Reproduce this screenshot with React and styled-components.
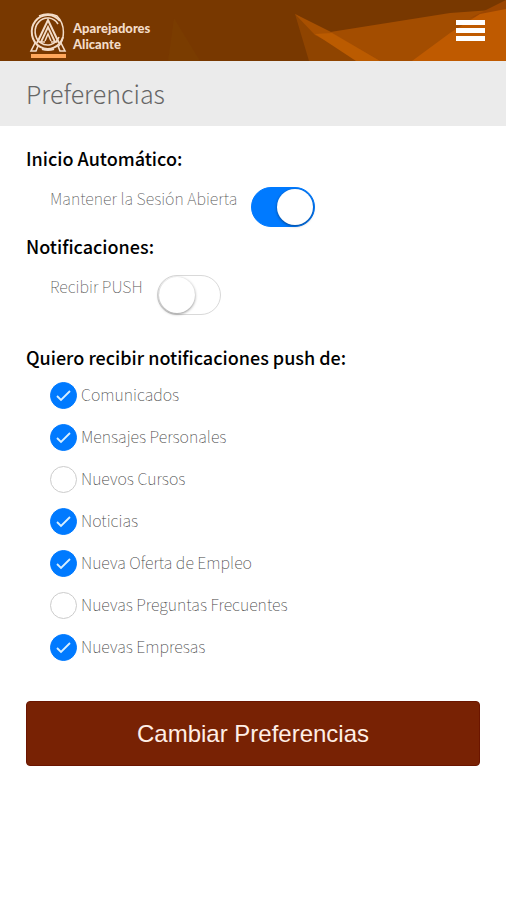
import React, { useState } from "react";
import styled, { createGlobalStyle } from "styled-components";

const opcionesIniciales = [
  { id: "comunicados", texto: "Comunicados", activo: true },
  { id: "mensajes", texto: "Mensajes Personales", activo: true },
  { id: "cursos", texto: "Nuevos Cursos", activo: false },
  { id: "noticias", texto: "Noticias", activo: true },
  { id: "empleo", texto: "Nueva Oferta de Empleo", activo: true },
  { id: "preguntas", texto: "Nuevas Preguntas Frecuentes", activo: false },
  { id: "empresas", texto: "Nuevas Empresas", activo: true },
];

function Logo() {
  return (
    <svg width="38" height="46" viewBox="0 0 38 46" fill="none" aria-hidden="true">
      <g stroke="#f3dcc8">
        <path d="M31 8A16 17 0 1 0 34 24" strokeWidth="2" />
        <path d="M29 11A12.5 13.5 0 1 0 30 24" strokeWidth="1.6" />
        <path d="M10 3Q19 -1 28 3Q36 11 34 24Q33 30 29 34" strokeWidth="1.5" />
        <path d="M8 30L19 7L30 30" strokeWidth="2" />
        <path d="M12 29L19 14L26 29" strokeWidth="1.8" />
        <path d="M16 28L19 21L22 28" strokeWidth="1.5" />
        <path d="M10 29H16M22 29H28" strokeWidth="1.4" />
        <path d="M6 30L2 38H7L9 33M32 30L36 38H31L29 33" strokeWidth="1.6" />
        <path d="M13 36Q19 38 25 36" strokeWidth="2" />
      </g>
      <rect x="2" y="41" width="35" height="4" fill="#ffa75b" />
    </svg>
  );
}

function Interruptor({ id, texto, activo, onChange }) {
  return (
    <FilaInterruptor>
      <label htmlFor={id}>{texto}</label>
      <Switch id={id} type="checkbox" role="switch" checked={activo} onChange={onChange} />
    </FilaInterruptor>
  );
}

function Opcion({ opcion, handleCambio }) {
  return (
    <FilaOpcion>
      <span className="casilla">
        <input
          id={opcion.id}
          type="checkbox"
          checked={opcion.activo}
          onChange={() => handleCambio(opcion.id)}
        />
        <svg width="26" height="26" viewBox="0 0 26 26" aria-hidden="true">
          <path d="M7 14L11 18L20 9" fill="none" stroke="#d9f0ff" strokeWidth="1.8" />
        </svg>
      </span>
      <label htmlFor={opcion.id}>{opcion.texto}</label>
    </FilaOpcion>
  );
}

export default function App() {
  const [sesion, setSesion] = useState(true);
  const [push, setPush] = useState(false);
  const [opciones, setOpciones] = useState(opcionesIniciales);

  const handleCambio = (id) => {
    setOpciones(opciones.map((o) => (o.id === id ? { ...o, activo: !o.activo } : o)));
  };

  return (
    <>
      <GlobalStyle />
      <Cabecera>
        <Fondo viewBox="0 0 506 61" preserveAspectRatio="none" aria-hidden="true">
          <path d="M174 18L200 61H168Z" fill="#7a3c00" />
          <path d="M295 14L350 46L380 61H309Z" fill="#8f4400" />
          <path d="M324 33L450 13L506 9V61H378Z" fill="#a34d00" />
          <path d="M295 14L335 34L380 61H365L315 35Z" fill="#a85000" />
          <path d="M315 34L332 33L380 61H356Z" fill="#bb5b00" />
          <path d="M470 18L506 0V12Z" fill="#9c4600" />
          <path d="M412 61L450 33L480 14L506 9V61Z" fill="#bf5a00" />
        </Fondo>
        <Marca href="#">
          <Logo />
          <span>
            Aparejadores
            <br />
            Alicante
          </span>
        </Marca>
        <BotonMenu type="button" aria-label="Menú">
          <span />
          <span />
          <span />
        </BotonMenu>
      </Cabecera>
      <BarraTitulo>
        <h1>Preferencias</h1>
      </BarraTitulo>
      <Formulario onSubmit={(e) => e.preventDefault()}>
        <Seccion>
          <h2>Inicio Automático:</h2>
          <Interruptor
            id="sesion"
            texto="Mantener la Sesión Abierta"
            activo={sesion}
            onChange={() => setSesion(!sesion)}
          />
        </Seccion>
        <Seccion>
          <h2>Notificaciones:</h2>
          <Interruptor
            id="push"
            texto="Recibir PUSH"
            activo={push}
            onChange={() => setPush(!push)}
          />
        </Seccion>
        <Lista>
          <legend>Quiero recibir notificaciones push de:</legend>
          {opciones.map((opcion) => (
            <Opcion key={opcion.id} opcion={opcion} handleCambio={handleCambio} />
          ))}
        </Lista>
        <BotonEnviar type="submit">Cambiar Preferencias</BotonEnviar>
      </Formulario>
    </>
  );
}

const GlobalStyle = createGlobalStyle`
  * {
    box-sizing: border-box;
  }
  body {
    margin: 0;
    background-color: #fff;
    color: #000;
    font-family: "Noto Sans CJK SC", "Noto Sans", sans-serif;
  }
  h1, h2 {
    margin: 0;
  }
`;

const Cabecera = styled.header`
  position: relative;
  display: flex;
  justify-content: space-between;
  align-items: center;
  height: 61px;
  padding: 0 21px 0 29px;
  background-color: #783800;
`;

const Fondo = styled.svg`
  position: absolute;
  inset: 0;
  width: 100%;
  height: 100%;
`;

const Marca = styled.a`
  position: relative;
  display: flex;
  align-items: center;
  gap: 6px;
  padding-top: 10px;
  color: #f3dcc8;
  font-family: Lato, sans-serif;
  font-size: 13px;
  font-weight: 900;
  line-height: 16px;
  text-decoration: none;
`;

const BotonMenu = styled.button`
  position: relative;
  display: flex;
  flex-direction: column;
  gap: 3px;
  padding: 0;
  border: none;
  background: none;
  cursor: pointer;
  span {
    width: 29px;
    height: 5px;
    background-color: #fff;
  }
`;

const BarraTitulo = styled.div`
  padding: 16px 26px;
  background-color: #ebebeb;
  h1 {
    color: #666;
    font-size: 25px;
    font-weight: 300;
    line-height: 33px;
  }
`;

const Formulario = styled.form`
  padding: 20px 26px;
`;

const Seccion = styled.section`
  padding-bottom: 7px;
  h2 {
    font-size: 18px;
    font-weight: 500;
    line-height: 24px;
  }
`;

const FilaInterruptor = styled.div`
  display: flex;
  align-items: flex-start;
  gap: 14px;
  padding: 17px 0 0 24px;
  label {
    color: #555;
    font-size: 16px;
    font-weight: 100;
    line-height: 22px;
  }
`;

const Switch = styled.input`
  appearance: none;
  flex-shrink: 0;
  width: 64px;
  height: 40px;
  margin: 0;
  padding: 1px;
  border: 1px solid ${({ checked }) => (checked ? "#007aff" : "#d9d9d9")};
  border-radius: 20px;
  background-color: ${({ checked }) => (checked ? "#007aff" : "#fff")};
  cursor: pointer;
  &::before {
    content: "";
    display: block;
    width: 36px;
    height: 36px;
    margin-left: ${({ checked }) => (checked ? "auto" : "0")};
    border-radius: 50%;
    background-color: #fff;
    box-shadow: 0 1px 3px rgba(0, 0, 0, 0.45);
  }
`;

const Lista = styled.fieldset`
  min-width: 0;
  margin: 0;
  padding: 5px 0 0 24px;
  border: none;
  legend {
    margin-left: -24px;
    padding: 23px 0 0;
    font-size: 18px;
    font-weight: 500;
    line-height: 24px;
  }
`;

const FilaOpcion = styled.div`
  display: flex;
  align-items: center;
  gap: 4px;
  height: 42px;
  label {
    padding-bottom: 2px;
    color: #444;
    font-size: 16px;
    font-weight: 100;
    line-height: 22px;
  }
  .casilla {
    position: relative;
    display: flex;
  }
  input {
    appearance: none;
    width: 27px;
    height: 27px;
    margin: 0;
    border: 1px solid #ccc;
    border-radius: 50%;
    background-color: #fff;
    cursor: pointer;
  }
  input:checked {
    border-color: #007aff;
    background-color: #007aff;
  }
  svg {
    position: absolute;
    inset: 0;
    pointer-events: none;
    visibility: hidden;
  }
  input:checked + svg {
    visibility: visible;
  }
`;

const BotonEnviar = styled.button`
  display: block;
  width: 100%;
  margin-top: 33px;
  padding: 16px;
  border: 1px solid #6b1500;
  border-radius: 4px;
  background-color: #782204;
  color: #ffeee6;
  font-family: "Liberation Sans", Arial, sans-serif;
  font-size: 24px;
  line-height: 31px;
  cursor: pointer;
`;
